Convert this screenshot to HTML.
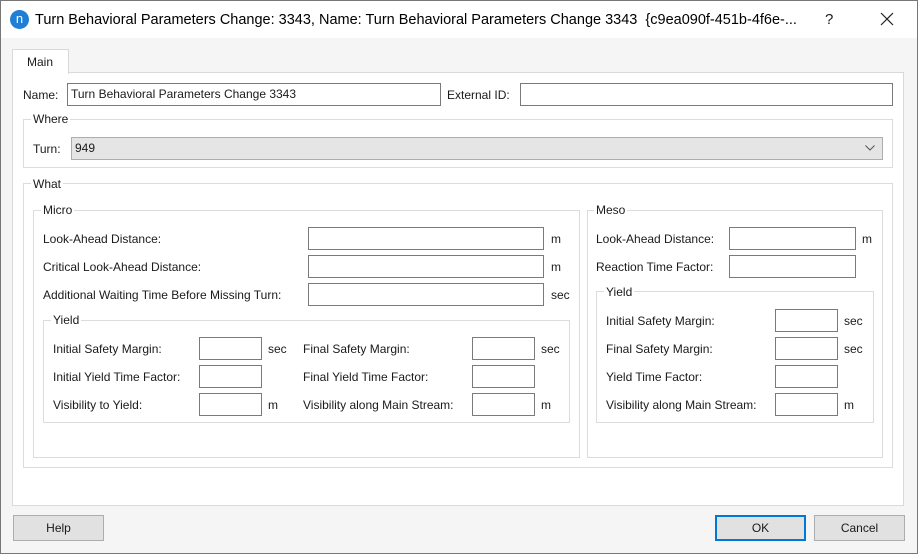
<!DOCTYPE html>
<html><head><style>
*{margin:0;padding:0;box-sizing:border-box}
body{width:918px;height:554px;background:#f5f5f5;font-family:"Liberation Sans",sans-serif;font-size:12px;color:#1a1a1a;position:relative;overflow:hidden}
.a{position:absolute}
.t{position:absolute;white-space:nowrap;line-height:14px}
.in{position:absolute;background:#fff;border:1px solid #7a7a7a;height:23px}
.g{position:absolute;border:1px solid #dcdcdc}
.gl{position:absolute;background:#fff;padding:0 2px;line-height:14px;white-space:nowrap}
.btn{position:absolute;background:#e1e1e1;border:1px solid #adadad;height:26px;width:91px;text-align:center;line-height:24px}
</style></head><body>
<div class="a" style="left:0;top:0;width:918px;height:554px;border:1px solid #777"></div>
<div class="a" style="left:1px;top:1px;width:916px;height:37px;background:#fff"></div>
<div class="a" style="left:10px;top:10px;width:19px;height:19px;border-radius:50%;background:#1d7fd6;color:#fff;font-size:13px;text-align:center;line-height:17px">n</div>
<div class="t" style="left:35px;top:11px;font-size:14.5px;line-height:18px;color:#000">Turn Behavioral Parameters Change: 3343, Name: Turn Behavioral Parameters Change 3343 &nbsp;{c9ea090f-451b-4f6e-...</div>
<div class="t" style="left:825px;top:11px;font-size:15px;line-height:18px">?</div>
<svg class="a" style="left:880px;top:12px" width="14" height="14"><path d="M1 1L13 13M13 1L1 13" stroke="#222" stroke-width="1.2"/></svg>

<div class="a" style="left:12px;top:72px;width:892px;height:434px;background:#fff;border:1px solid #d9d9d9"></div>
<div class="a" style="left:12px;top:49px;width:57px;height:25px;background:#fff;border:1px solid #d9d9d9;border-bottom:none"></div>
<div class="t" style="left:27px;top:55px">Main</div>

<div class="t" style="left:23px;top:88px">Name:</div>
<div class="in" style="left:67px;top:83px;width:374px;padding-left:3px;line-height:21px">Turn Behavioral Parameters Change 3343</div>
<div class="t" style="left:447px;top:88px">External ID:</div>
<div class="in" style="left:520px;top:83px;width:373px"></div>

<div class="g" style="left:23px;top:119px;width:870px;height:49px"></div>
<div class="gl" style="left:31px;top:112px">Where</div>
<div class="t" style="left:33px;top:142px">Turn:</div>
<div class="in" style="left:71px;top:137px;width:812px;background:#e5e5e5;border-color:#adadad;padding-left:3px;line-height:21px">949</div>
<svg class="a" style="left:865px;top:145px" width="10" height="6"><path d="M0.5 0.5L5 5L9.5 0.5" stroke="#555" fill="none"/></svg>

<div class="g" style="left:23px;top:183px;width:870px;height:285px"></div>
<div class="gl" style="left:31px;top:177px">What</div>

<div class="g" style="left:33px;top:210px;width:547px;height:248px"></div>
<div class="gl" style="left:41px;top:203px">Micro</div>
<div class="t" style="left:43px;top:232px">Look-Ahead Distance:</div>
<div class="in" style="left:308px;top:227px;width:236px"></div><div class="t" style="left:551px;top:232px">m</div>
<div class="t" style="left:43px;top:260px">Critical Look-Ahead Distance:</div>
<div class="in" style="left:308px;top:255px;width:236px"></div><div class="t" style="left:551px;top:260px">m</div>
<div class="t" style="left:43px;top:288px">Additional Waiting Time Before Missing Turn:</div>
<div class="in" style="left:308px;top:283px;width:236px"></div><div class="t" style="left:551px;top:288px">sec</div>

<div class="g" style="left:43px;top:320px;width:527px;height:103px"></div>
<div class="gl" style="left:51px;top:313px">Yield</div>
<div class="t" style="left:53px;top:342px">Initial Safety Margin:</div>
<div class="in" style="left:199px;top:337px;width:63px"></div><div class="t" style="left:268px;top:342px">sec</div>
<div class="t" style="left:53px;top:370px">Initial Yield Time Factor:</div>
<div class="in" style="left:199px;top:365px;width:63px"></div>
<div class="t" style="left:53px;top:398px">Visibility to Yield:</div>
<div class="in" style="left:199px;top:393px;width:63px"></div><div class="t" style="left:268px;top:398px">m</div>
<div class="t" style="left:303px;top:342px">Final Safety Margin:</div>
<div class="in" style="left:472px;top:337px;width:63px"></div><div class="t" style="left:541px;top:342px">sec</div>
<div class="t" style="left:303px;top:370px">Final Yield Time Factor:</div>
<div class="in" style="left:472px;top:365px;width:63px"></div>
<div class="t" style="left:303px;top:398px">Visibility along Main Stream:</div>
<div class="in" style="left:472px;top:393px;width:63px"></div><div class="t" style="left:541px;top:398px">m</div>

<div class="g" style="left:587px;top:210px;width:296px;height:248px"></div>
<div class="gl" style="left:594px;top:203px">Meso</div>
<div class="t" style="left:596px;top:232px">Look-Ahead Distance:</div>
<div class="in" style="left:729px;top:227px;width:127px"></div><div class="t" style="left:862px;top:232px">m</div>
<div class="t" style="left:596px;top:260px">Reaction Time Factor:</div>
<div class="in" style="left:729px;top:255px;width:127px"></div>
<div class="g" style="left:596px;top:291px;width:278px;height:132px"></div>
<div class="gl" style="left:604px;top:285px">Yield</div>
<div class="t" style="left:606px;top:314px">Initial Safety Margin:</div>
<div class="in" style="left:775px;top:309px;width:63px"></div><div class="t" style="left:844px;top:314px">sec</div>
<div class="t" style="left:606px;top:342px">Final Safety Margin:</div>
<div class="in" style="left:775px;top:337px;width:63px"></div><div class="t" style="left:844px;top:342px">sec</div>
<div class="t" style="left:606px;top:370px">Yield Time Factor:</div>
<div class="in" style="left:775px;top:365px;width:63px"></div>
<div class="t" style="left:606px;top:398px">Visibility along Main Stream:</div>
<div class="in" style="left:775px;top:393px;width:63px"></div><div class="t" style="left:844px;top:398px">m</div>

<div class="btn" style="left:13px;top:515px">Help</div>
<div class="btn" style="left:715px;top:515px;border:2px solid #0078d7;line-height:22px">OK</div>
<div class="btn" style="left:814px;top:515px">Cancel</div>
</body></html>
